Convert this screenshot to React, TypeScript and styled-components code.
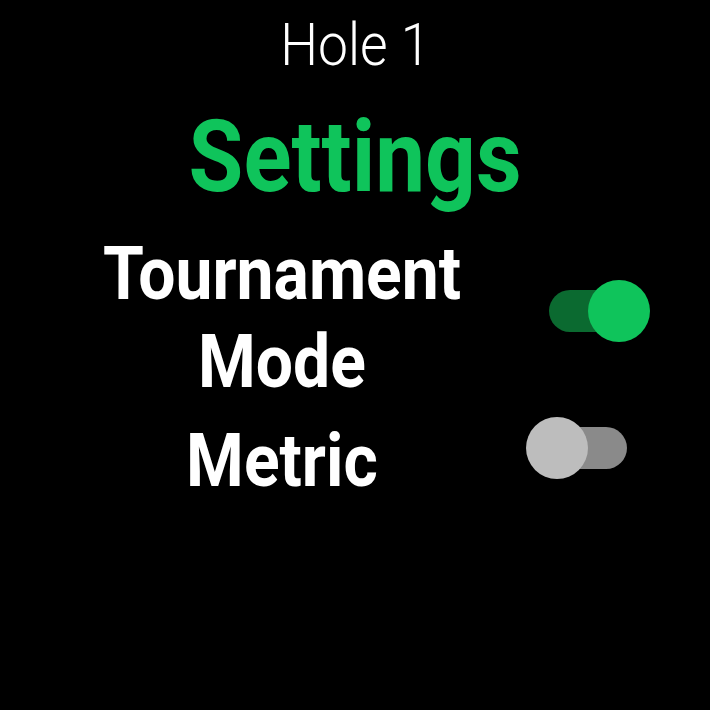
import React, { FC } from "react";
import styled, { createGlobalStyle } from "styled-components";

const GlobalStyle = createGlobalStyle`
  html, body {
    margin: 0;
    padding: 0;
    background: #000000;
  }
  body {
    font-family: "Roboto", "Liberation Sans", sans-serif;
  }
`;

const Screen = styled.div`
  width: 710px;
  height: 710px;
  background: #000000;
  display: flex;
  flex-direction: column;
  align-items: center;
  overflow: hidden;
`;

const HoleTitle = styled.div`
  margin-top: 9px;
  font-size: 60px;
  font-weight: 300;
  color: #ffffff;
  line-height: normal;
  transform: scaleX(0.89);
`;

const Heading = styled.h1`
  margin: 18px 0 0 0;
  font-size: 100px;
  font-weight: 700;
  color: #0fc45b;
  line-height: normal;
  transform: scaleX(0.89);
`;

const SettingsList = styled.div`
  margin-top: 14px;
  width: 100%;
  display: flex;
  flex-direction: column;
  gap: 11px;
`;

const Row = styled.div`
  display: grid;
  grid-template-columns: 440px 78px;
  column-gap: 47px;
  padding-left: 62px;
  align-items: center;
`;

const Label = styled.div`
  font-size: 75px;
  font-weight: 700;
  color: #ffffff;
  line-height: 88px;
  text-align: center;
  white-space: nowrap;
  transform: scaleX(0.88);
`;

const Track = styled.div<{ $on: boolean; $lift: number }>`
  position: relative;
  width: 78px;
  height: 42px;
  margin-top: ${(p) => -p.$lift * 2}px;
  border-radius: 21px;
  background: ${(p) => (p.$on ? "#0b6a30" : "#8a8a8a")};
`;

const Thumb = styled.div<{ $on: boolean }>`
  position: absolute;
  top: -10px;
  left: ${(p) => (p.$on ? "39px" : "-23px")};
  width: 62px;
  height: 62px;
  border-radius: 50%;
  background: ${(p) => (p.$on ? "#0fc45b" : "#bdbdbd")};
`;

interface ToggleProps {
  on: boolean;
  lift?: number;
}

const Toggle: FC<ToggleProps> = ({ on, lift = 0 }) => (
  <Track $on={on} $lift={lift} role="switch" aria-checked={on}>
    <Thumb $on={on} />
  </Track>
);

const App: FC = () => {
  return (
    <>
      <GlobalStyle />
      <Screen>
        <HoleTitle>Hole 1</HoleTitle>
        <Heading>Settings</Heading>
        <SettingsList>
          <Row>
            <Label>
              Tournament
              <br />
              Mode
            </Label>
            <Toggle on={true} lift={6} />
          </Row>
          <Row>
            <Label>Metric</Label>
            <Toggle on={false} lift={12} />
          </Row>
        </SettingsList>
      </Screen>
    </>
  );
};

export default App;
